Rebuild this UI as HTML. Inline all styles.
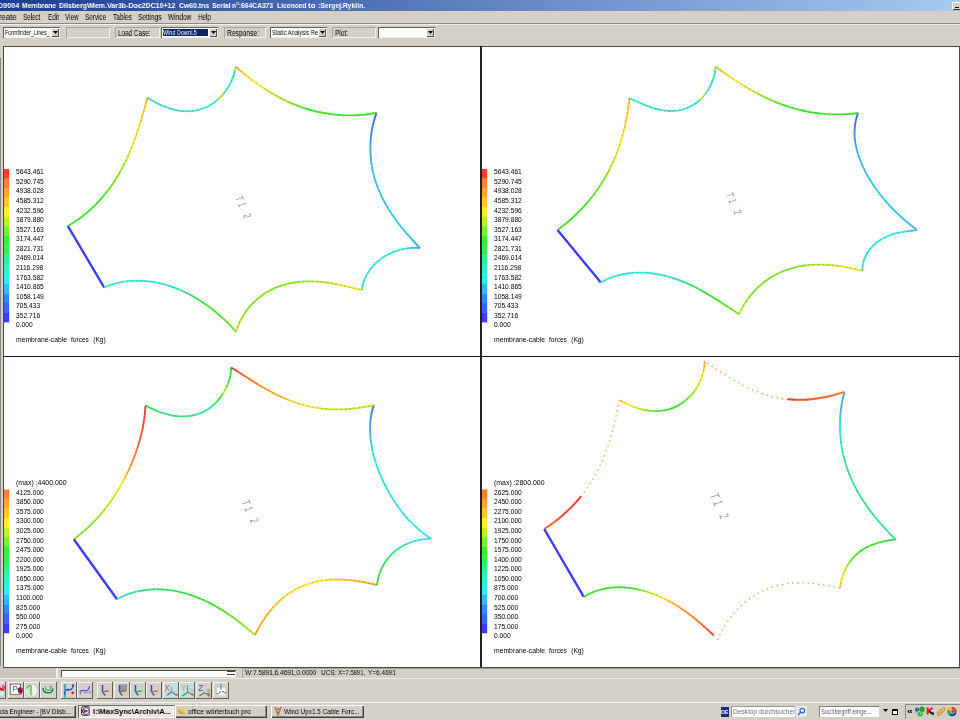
<!DOCTYPE html>
<html><head><meta charset="utf-8"><title>Membrane cable forces</title>
<style>
html,body{margin:0;padding:0}
body{width:960px;height:720px;overflow:hidden;background:#d4d0c8;position:relative;font-family:"Liberation Sans",sans-serif}
div,span.t,svg{position:absolute}
span.t{white-space:pre;display:block;will-change:transform}
.sunk{box-shadow:inset 1px 1px 0 #808080,inset -1px -1px 0 #fff}
.sunk2{box-shadow:inset 1px 1px 0 #808080,inset -1px -1px 0 #fff,inset 2px 2px 0 #404040}
.rais{box-shadow:inset -1px -1px 0 #404040,inset 1px 1px 0 #fff,inset -2px -2px 0 #808080}
.btn{box-shadow:inset -1px -1px 0 #606060,inset 1px 1px 0 #f4f2ee}
</style></head><body>

<div style="left:0px;top:0px;width:960px;height:10.7px;background:linear-gradient(90deg,#1b3c92 0%,#a6caf0 100%);"></div>
<div style="left:0;top:0;width:400px;height:10.7px">
<span class="t " style="left:-1.9px;top:-0.40px;font-size:8px;line-height:12px;color:#fff;transform:scaleX(0.8963);transform-origin:0 50%;font-weight:bold;">D9004</span>
 
<span class="t " style="left:21.6px;top:-0.40px;font-size:8px;line-height:12px;color:#fff;transform:scaleX(0.8542);transform-origin:0 50%;font-weight:bold;">Membrane</span>
 
<span class="t " style="left:59.1px;top:-0.40px;font-size:8px;line-height:12px;color:#fff;transform:scaleX(0.8768);transform-origin:0 50%;font-weight:bold;">Dilsberg\Mem.Var3b-Doc2DC10+12</span>
 
<span class="t " style="left:179.35px;top:-0.40px;font-size:8px;line-height:12px;color:#fff;transform:scaleX(0.8579);transform-origin:0 50%;font-weight:bold;">Cw60.tns</span>
 
<span class="t " style="left:211.85px;top:-0.40px;font-size:8px;line-height:12px;color:#fff;transform:scaleX(0.8549);transform-origin:0 50%;font-weight:bold;">Serial</span>
 
<span class="t " style="left:231.85px;top:-0.40px;font-size:8px;line-height:12px;color:#fff;transform:scaleX(0.8394);transform-origin:0 50%;font-weight:bold;">n°:664CA373</span>
 
<span class="t " style="left:276.6px;top:-0.40px;font-size:8px;line-height:12px;color:#fff;transform:scaleX(0.8472);transform-origin:0 50%;font-weight:bold;">Licenced</span>
 
<span class="t " style="left:308.35px;top:-0.40px;font-size:8px;line-height:12px;color:#fff;transform:scaleX(0.9442);transform-origin:0 50%;font-weight:bold;">to</span>
 
<span class="t " style="left:317.6px;top:-0.40px;font-size:8px;line-height:12px;color:#fff;transform:scaleX(0.8480);transform-origin:0 50%;font-weight:bold;">:Sergej.Ryklin.</span>
 
</div>
<div style="left:952px;top:1.5px;width:9px;height:8px;background:#d4d0c8;box-shadow:inset 1px 1px 0 #fff,inset -1px -1px 0 #404040;"></div>
<div style="left:955px;top:6.5px;width:4px;height:1.5px;background:#000;"></div>
<span class="t " style="left:-6.925px;top:11.10px;font-size:8.5px;line-height:13px;color:#000;transform:scaleX(0.9283);transform-origin:0 50%;">Create</span>
<span class="t " style="left:23.325px;top:11.10px;font-size:8.5px;line-height:13px;color:#000;transform:scaleX(0.7274);transform-origin:0 50%;">Select</span>
<span class="t " style="left:47.575px;top:11.10px;font-size:8.5px;line-height:13px;color:#000;transform:scaleX(0.7466);transform-origin:0 50%;">Edit</span>
<span class="t " style="left:65.075px;top:11.10px;font-size:8.5px;line-height:13px;color:#000;transform:scaleX(0.7353);transform-origin:0 50%;">View</span>
<span class="t " style="left:85.075px;top:11.10px;font-size:8.5px;line-height:13px;color:#000;transform:scaleX(0.7474);transform-origin:0 50%;">Service</span>
<span class="t " style="left:112.825px;top:11.10px;font-size:8.5px;line-height:13px;color:#000;transform:scaleX(0.7706);transform-origin:0 50%;">Tables</span>
<span class="t " style="left:138.325px;top:11.10px;font-size:8.5px;line-height:13px;color:#000;transform:scaleX(0.7630);transform-origin:0 50%;">Settings</span>
<span class="t " style="left:168.325px;top:11.10px;font-size:8.5px;line-height:13px;color:#000;transform:scaleX(0.7752);transform-origin:0 50%;">Window</span>
<span class="t " style="left:197.575px;top:11.10px;font-size:8.5px;line-height:13px;color:#000;transform:scaleX(0.7399);transform-origin:0 50%;">Help</span>
<div style="left:0px;top:23px;width:960px;height:1px;background:#8c8a84;"></div>
<div style="left:0px;top:24px;width:960px;height:1px;background:#f4f2ee;"></div>
<div style="left:3px;top:27px;width:57px;height:10.5px;background:#fff;box-shadow:inset 1px 1px 0 #606060,inset -1px -1px 0 #f0eee8;"></div>
<div style="left:50.5px;top:28px;width:8.5px;height:8.5px;background:#d4d0c8;box-shadow:inset 1px 1px 0 #fff,inset -1px -1px 0 #505050;"></div>
<svg style="left:52.5px;top:31px" width="5" height="3"><path d="M0 0H5L2.5 3Z" fill="#000"/></svg>
<span class="t " style="left:5.165px;top:27.70px;font-size:6.7px;line-height:10px;color:#000;transform:scaleX(0.8008);transform-origin:0 50%;">Formfinder_Lines_</span>
<div style="left:65.5px;top:27px;width:44.5px;height:10.5px;box-shadow:inset 1px 1px 0 #a8a6a0,inset -1px -1px 0 #f4f2ee;"></div>
<div style="left:115px;top:27px;width:45px;height:10.5px;box-shadow:inset 1px 1px 0 #a8a6a0,inset -1px -1px 0 #f4f2ee;"></div>
<span class="t " style="left:117.575px;top:26.50px;font-size:8.5px;line-height:13px;color:#000;transform:scaleX(0.7460);transform-origin:0 50%;">Load Case:</span>
<div style="left:161px;top:27px;width:57px;height:10.5px;background:#fff;box-shadow:inset 1px 1px 0 #606060,inset -1px -1px 0 #f0eee8;"></div>
<div style="left:208.5px;top:28px;width:8.5px;height:8.5px;background:#d4d0c8;box-shadow:inset 1px 1px 0 #fff,inset -1px -1px 0 #505050;"></div>
<svg style="left:210.5px;top:31px" width="5" height="3"><path d="M0 0H5L2.5 3Z" fill="#000"/></svg>
<div style="left:162.5px;top:28.5px;width:45px;height:7.5px;background:#0a246a;"></div>
<span class="t " style="left:163.165px;top:27.70px;font-size:6.7px;line-height:10px;color:#fff;transform:scaleX(0.8162);transform-origin:0 50%;">Wind Downl.5</span>
<div style="left:223.5px;top:27px;width:42.5px;height:10.5px;box-shadow:inset 1px 1px 0 #a8a6a0,inset -1px -1px 0 #f4f2ee;"></div>
<span class="t " style="left:226.575px;top:26.50px;font-size:8.5px;line-height:13px;color:#000;transform:scaleX(0.7859);transform-origin:0 50%;">Response:</span>
<div style="left:269.5px;top:27px;width:57.5px;height:10.5px;background:#fff;box-shadow:inset 1px 1px 0 #606060,inset -1px -1px 0 #f0eee8;"></div>
<div style="left:317.5px;top:28px;width:8.5px;height:8.5px;background:#d4d0c8;box-shadow:inset 1px 1px 0 #fff,inset -1px -1px 0 #505050;"></div>
<svg style="left:319.5px;top:31px" width="5" height="3"><path d="M0 0H5L2.5 3Z" fill="#000"/></svg>
<span class="t " style="left:271.665px;top:27.70px;font-size:6.7px;line-height:10px;color:#000;transform:scaleX(0.8622);transform-origin:0 50%;">Static Analysis Re</span>
<div style="left:332px;top:27px;width:44px;height:10.5px;box-shadow:inset 1px 1px 0 #a8a6a0,inset -1px -1px 0 #f4f2ee;"></div>
<span class="t " style="left:335.075px;top:26.50px;font-size:8.5px;line-height:13px;color:#000;transform:scaleX(0.7605);transform-origin:0 50%;">Plot:</span>
<div style="left:378px;top:27px;width:57px;height:10.5px;background:#fff;box-shadow:inset 1px 1px 0 #606060,inset -1px -1px 0 #f0eee8;"></div>
<div style="left:425.5px;top:28px;width:8.5px;height:8.5px;background:#d4d0c8;box-shadow:inset 1px 1px 0 #fff,inset -1px -1px 0 #505050;"></div>
<svg style="left:427.5px;top:31px" width="5" height="3"><path d="M0 0H5L2.5 3Z" fill="#000"/></svg>
<div style="left:2.5px;top:45.5px;width:957px;height:622.5px;background:#fff;box-sizing:border-box;border:1.5px solid #4a4a4a;border-right-width:1.2px;border-bottom-width:1.5px;"></div>
<div style="left:0px;top:58px;width:1.3px;height:608px;background:#8a8886;"></div>
<div style="left:480px;top:46px;width:1.7px;height:621px;background:#222;"></div>
<div style="left:3px;top:356px;width:956px;height:1.4px;background:#1a1a1a;"></div>
<svg width="960" height="720" viewBox="0 0 960 720" style="left:0;top:0" font-family="Liberation Sans, sans-serif">
<defs>
<linearGradient id="g1AB" gradientUnits="userSpaceOnUse" x1="235.6" y1="66.8" x2="147.5" y2="97.8"><stop offset="0.000" stop-color="#fca42c"/><stop offset="0.009" stop-color="#fcee2c"/><stop offset="0.021" stop-color="#30ee96"/><stop offset="0.084" stop-color="#30eec6"/><stop offset="0.175" stop-color="#30eeee"/><stop offset="0.259" stop-color="#c0ee2c"/><stop offset="0.326" stop-color="#30eeee"/><stop offset="0.555" stop-color="#30eeee"/><stop offset="0.728" stop-color="#30eec6"/><stop offset="1.000" stop-color="#30eec6"/></linearGradient>
<linearGradient id="g1BC" gradientUnits="userSpaceOnUse" x1="147.5" y1="97.8" x2="67.8" y2="226.0"><stop offset="0.000" stop-color="#fca42c"/><stop offset="0.030" stop-color="#fcc82c"/><stop offset="0.149" stop-color="#fcd82c"/><stop offset="0.279" stop-color="#fcee2c"/><stop offset="0.421" stop-color="#c0ee2c"/><stop offset="0.554" stop-color="#7cee2c"/><stop offset="0.759" stop-color="#36ee36"/><stop offset="1.000" stop-color="#36ee36"/></linearGradient>
<linearGradient id="g1CD" gradientUnits="userSpaceOnUse" x1="67.8" y1="226.0" x2="104.2" y2="287.5"><stop offset="0.000" stop-color="#3c3cfc"/><stop offset="1.000" stop-color="#3c3cfc"/></linearGradient>
<linearGradient id="g1DE" gradientUnits="userSpaceOnUse" x1="104.2" y1="287.5" x2="236.0" y2="331.8"><stop offset="0.000" stop-color="#30eeee"/><stop offset="0.335" stop-color="#30eeee"/><stop offset="0.495" stop-color="#30eec6"/><stop offset="0.654" stop-color="#30ee60"/><stop offset="0.807" stop-color="#36ee36"/><stop offset="1.000" stop-color="#7cee2c"/></linearGradient>
<linearGradient id="g1EF" gradientUnits="userSpaceOnUse" x1="236.0" y1="331.8" x2="361.8" y2="290.0"><stop offset="0.000" stop-color="#c0ee2c"/><stop offset="0.117" stop-color="#7cee2c"/><stop offset="0.489" stop-color="#7cee2c"/><stop offset="0.807" stop-color="#c0ee2c"/><stop offset="1.000" stop-color="#fcee2c"/></linearGradient>
<linearGradient id="g1FG" gradientUnits="userSpaceOnUse" x1="361.8" y1="290.0" x2="420.0" y2="248.0"><stop offset="0.000" stop-color="#30eec6"/><stop offset="0.279" stop-color="#30eeee"/><stop offset="0.816" stop-color="#30eeee"/><stop offset="1.000" stop-color="#34b8f6"/></linearGradient>
<linearGradient id="g1GH" gradientUnits="userSpaceOnUse" x1="420.0" y1="248.0" x2="376.5" y2="112.8"><stop offset="-0.000" stop-color="#34b8f6"/><stop offset="0.194" stop-color="#30d0f4"/><stop offset="0.610" stop-color="#30ccf4"/><stop offset="0.766" stop-color="#34b8f6"/><stop offset="0.893" stop-color="#3488f6"/><stop offset="1.000" stop-color="#3c62f6"/></linearGradient>
<linearGradient id="g1HA" gradientUnits="userSpaceOnUse" x1="376.5" y1="112.8" x2="235.6" y2="66.8"><stop offset="-0.000" stop-color="#36ee36"/><stop offset="0.446" stop-color="#36ee36"/><stop offset="0.602" stop-color="#7cee2c"/><stop offset="0.724" stop-color="#c0ee2c"/><stop offset="0.854" stop-color="#fcee2c"/><stop offset="0.952" stop-color="#fcc82c"/><stop offset="1.000" stop-color="#fca42c"/></linearGradient>
<linearGradient id="g2AB" gradientUnits="userSpaceOnUse" x1="715.5" y1="66.8" x2="629.5" y2="98.2"><stop offset="0.000" stop-color="#fca42c"/><stop offset="0.008" stop-color="#fcee2c"/><stop offset="0.018" stop-color="#30ee96"/><stop offset="0.077" stop-color="#30eec6"/><stop offset="0.166" stop-color="#30eeee"/><stop offset="0.249" stop-color="#c0ee2c"/><stop offset="0.317" stop-color="#30eeee"/><stop offset="0.548" stop-color="#30eeee"/><stop offset="0.719" stop-color="#30eec6"/><stop offset="1.000" stop-color="#30eec6"/></linearGradient>
<linearGradient id="g2BC" gradientUnits="userSpaceOnUse" x1="629.5" y1="98.2" x2="557.5" y2="230.0"><stop offset="0.000" stop-color="#fca42c"/><stop offset="0.029" stop-color="#fcc82c"/><stop offset="0.146" stop-color="#fcd82c"/><stop offset="0.275" stop-color="#fcee2c"/><stop offset="0.418" stop-color="#c0ee2c"/><stop offset="0.552" stop-color="#7cee2c"/><stop offset="0.757" stop-color="#36ee36"/><stop offset="1.000" stop-color="#36ee36"/></linearGradient>
<linearGradient id="g2CD" gradientUnits="userSpaceOnUse" x1="557.5" y1="230.0" x2="600.8" y2="282.5"><stop offset="0.000" stop-color="#3c3cfc"/><stop offset="1.000" stop-color="#3c3cfc"/></linearGradient>
<linearGradient id="g2DE" gradientUnits="userSpaceOnUse" x1="600.8" y1="282.5" x2="739.2" y2="314.2"><stop offset="0.000" stop-color="#30eeee"/><stop offset="0.335" stop-color="#30eeee"/><stop offset="0.493" stop-color="#30eec6"/><stop offset="0.649" stop-color="#30ee60"/><stop offset="0.801" stop-color="#36ee36"/><stop offset="1.000" stop-color="#7cee2c"/></linearGradient>
<linearGradient id="g2EF" gradientUnits="userSpaceOnUse" x1="739.2" y1="314.2" x2="862.5" y2="270.8"><stop offset="0.000" stop-color="#c0ee2c"/><stop offset="0.126" stop-color="#7cee2c"/><stop offset="0.494" stop-color="#7cee2c"/><stop offset="0.809" stop-color="#c0ee2c"/><stop offset="1.000" stop-color="#fcee2c"/></linearGradient>
<linearGradient id="g2FG" gradientUnits="userSpaceOnUse" x1="862.5" y1="270.8" x2="917.0" y2="230.0"><stop offset="0.000" stop-color="#30eec6"/><stop offset="0.268" stop-color="#30eeee"/><stop offset="0.805" stop-color="#30eeee"/><stop offset="1.000" stop-color="#34b8f6"/></linearGradient>
<linearGradient id="g2GH" gradientUnits="userSpaceOnUse" x1="917.0" y1="230.0" x2="858.0" y2="113.0"><stop offset="-0.000" stop-color="#34b8f6"/><stop offset="0.196" stop-color="#30d0f4"/><stop offset="0.614" stop-color="#30ccf4"/><stop offset="0.772" stop-color="#34b8f6"/><stop offset="0.900" stop-color="#3488f6"/><stop offset="1.000" stop-color="#3c62f6"/></linearGradient>
<linearGradient id="g2HA" gradientUnits="userSpaceOnUse" x1="858.0" y1="113.0" x2="715.5" y2="66.8"><stop offset="-0.000" stop-color="#36ee36"/><stop offset="0.447" stop-color="#36ee36"/><stop offset="0.601" stop-color="#7cee2c"/><stop offset="0.722" stop-color="#c0ee2c"/><stop offset="0.852" stop-color="#fcee2c"/><stop offset="0.951" stop-color="#fcc82c"/><stop offset="1.000" stop-color="#fca42c"/></linearGradient>
<linearGradient id="g3AB" gradientUnits="userSpaceOnUse" x1="231.2" y1="367.5" x2="145.5" y2="405.5"><stop offset="0.000" stop-color="#fb3a3a"/><stop offset="0.012" stop-color="#36ee36"/><stop offset="0.083" stop-color="#30ee60"/><stop offset="0.173" stop-color="#c0ee2c"/><stop offset="0.235" stop-color="#30ee60"/><stop offset="0.372" stop-color="#30ee96"/><stop offset="0.780" stop-color="#30ee96"/><stop offset="0.937" stop-color="#30ee60"/><stop offset="1.000" stop-color="#36ee36"/></linearGradient>
<linearGradient id="g3BC" gradientUnits="userSpaceOnUse" x1="145.5" y1="405.5" x2="73.8" y2="539.2"><stop offset="0.000" stop-color="#fb3a3a"/><stop offset="0.144" stop-color="#f05030"/><stop offset="0.295" stop-color="#fc8034"/><stop offset="0.418" stop-color="#fca42c"/><stop offset="0.521" stop-color="#fcee2c"/><stop offset="0.685" stop-color="#c0ee2c"/><stop offset="0.856" stop-color="#7cee2c"/><stop offset="1.000" stop-color="#7cee2c"/></linearGradient>
<linearGradient id="g3CD" gradientUnits="userSpaceOnUse" x1="73.8" y1="539.2" x2="117.0" y2="599.2"><stop offset="0.000" stop-color="#3c3cfc"/><stop offset="1.000" stop-color="#3c3cfc"/></linearGradient>
<linearGradient id="g3DE" gradientUnits="userSpaceOnUse" x1="117.0" y1="599.2" x2="255.0" y2="635.0"><stop offset="0.000" stop-color="#30eec6"/><stop offset="0.179" stop-color="#30ee96"/><stop offset="0.387" stop-color="#30ee60"/><stop offset="0.652" stop-color="#36ee36"/><stop offset="0.884" stop-color="#7cee2c"/><stop offset="1.000" stop-color="#c0ee2c"/></linearGradient>
<linearGradient id="g3EF" gradientUnits="userSpaceOnUse" x1="255.0" y1="635.0" x2="377.0" y2="585.0"><stop offset="0.000" stop-color="#fca42c"/><stop offset="0.229" stop-color="#fcc82c"/><stop offset="0.442" stop-color="#fcee2c"/><stop offset="0.607" stop-color="#fcee2c"/><stop offset="0.813" stop-color="#fcc82c"/><stop offset="1.000" stop-color="#fca42c"/></linearGradient>
<linearGradient id="g3FG" gradientUnits="userSpaceOnUse" x1="377.0" y1="585.0" x2="431.2" y2="538.8"><stop offset="0.000" stop-color="#36ee36"/><stop offset="0.282" stop-color="#30ee60"/><stop offset="0.554" stop-color="#30ee96"/><stop offset="0.766" stop-color="#30eeee"/><stop offset="1.000" stop-color="#30eeee"/></linearGradient>
<linearGradient id="g3GH" gradientUnits="userSpaceOnUse" x1="431.2" y1="538.8" x2="373.8" y2="405.0"><stop offset="-0.000" stop-color="#30eeee"/><stop offset="0.714" stop-color="#30eeee"/><stop offset="0.866" stop-color="#34b8f6"/><stop offset="0.958" stop-color="#3488f6"/><stop offset="1.000" stop-color="#3c62f6"/></linearGradient>
<linearGradient id="g3HA" gradientUnits="userSpaceOnUse" x1="373.8" y1="405.0" x2="231.2" y2="367.5"><stop offset="-0.000" stop-color="#c0ee2c"/><stop offset="0.291" stop-color="#c0ee2c"/><stop offset="0.446" stop-color="#fcee2c"/><stop offset="0.601" stop-color="#fcc82c"/><stop offset="0.722" stop-color="#fca42c"/><stop offset="0.852" stop-color="#fc8034"/><stop offset="1.000" stop-color="#fb3a3a"/></linearGradient>
<linearGradient id="g4AB" gradientUnits="userSpaceOnUse" x1="704.5" y1="361.2" x2="619.5" y2="400.0"><stop offset="0.000" stop-color="#fca42c"/><stop offset="0.065" stop-color="#fcee2c"/><stop offset="0.202" stop-color="#c0ee2c"/><stop offset="0.433" stop-color="#36ee36"/><stop offset="0.675" stop-color="#36ee36"/><stop offset="0.833" stop-color="#c0ee2c"/><stop offset="0.923" stop-color="#fcee2c"/><stop offset="1.000" stop-color="#fcc82c"/></linearGradient>
<linearGradient id="g4BC" gradientUnits="userSpaceOnUse" x1="619.5" y1="400.0" x2="544.2" y2="529.0"><stop offset="0.000" stop-color="#fb3a3a"/><stop offset="0.708" stop-color="#fb3a3a"/><stop offset="0.858" stop-color="#f05030"/><stop offset="1.000" stop-color="#fc8034"/></linearGradient>
<linearGradient id="g4CD" gradientUnits="userSpaceOnUse" x1="544.2" y1="529.0" x2="583.8" y2="596.8"><stop offset="0.000" stop-color="#3c3cfc"/><stop offset="1.000" stop-color="#3c3cfc"/></linearGradient>
<linearGradient id="g4DE" gradientUnits="userSpaceOnUse" x1="583.8" y1="596.8" x2="713.8" y2="635.5"><stop offset="0.000" stop-color="#36ee36"/><stop offset="0.331" stop-color="#36ee36"/><stop offset="0.460" stop-color="#c0ee2c"/><stop offset="0.567" stop-color="#fcee2c"/><stop offset="0.703" stop-color="#fca42c"/><stop offset="0.854" stop-color="#fc8034"/><stop offset="1.000" stop-color="#fb3a3a"/></linearGradient>
<linearGradient id="g4EF" gradientUnits="userSpaceOnUse" x1="717.5" y1="640.0" x2="840.0" y2="588.2"><stop offset="0.000" stop-color="#f89030"/><stop offset="1.000" stop-color="#f89030"/></linearGradient>
<linearGradient id="g4FG" gradientUnits="userSpaceOnUse" x1="840.0" y1="588.2" x2="895.5" y2="539.5"><stop offset="0.000" stop-color="#fcc82c"/><stop offset="0.105" stop-color="#fcee2c"/><stop offset="0.230" stop-color="#c0ee2c"/><stop offset="0.443" stop-color="#36ee36"/><stop offset="0.812" stop-color="#36ee36"/><stop offset="1.000" stop-color="#30ee60"/></linearGradient>
<linearGradient id="g4GH" gradientUnits="userSpaceOnUse" x1="895.5" y1="539.5" x2="844.5" y2="392.0"><stop offset="-0.000" stop-color="#30ee96"/><stop offset="0.450" stop-color="#30ee96"/><stop offset="0.660" stop-color="#30eec6"/><stop offset="0.793" stop-color="#30eeee"/><stop offset="0.910" stop-color="#34b8f6"/><stop offset="1.000" stop-color="#34b8f6"/></linearGradient>
<linearGradient id="g4HA" gradientUnits="userSpaceOnUse" x1="844.5" y1="392.0" x2="704.5" y2="361.2"><stop offset="-0.000" stop-color="#fc8034"/><stop offset="0.189" stop-color="#f86030"/><stop offset="0.341" stop-color="#f04830"/><stop offset="0.414" stop-color="#fb3a3a"/><stop offset="1.000" stop-color="#fb3a3a"/></linearGradient>
</defs>
<path d="M235.6 66.8L234.9 70.7L233.9 74.7L232.4 78.7L230.7 82.6L228.6 86.4L226.2 90.1L223.6 93.6L220.7 96.8L217.6 99.8L214.3 102.5L210.7 104.8L207.1 106.8L203.2 108.4L199.3 109.7L195.3 110.6L191.2 111.1L187.0 111.3L182.8 111.1L178.6 110.6L174.4 109.7L170.3 108.6L166.2 107.2L162.2 105.6L158.3 103.8L154.6 101.9L150.9 99.8L147.5 97.8" fill="none" stroke="url(#g1AB)" stroke-width="1.9" stroke-linejoin="round"/>
<path d="M235.6 66.8L234.9 70.7L233.9 74.7L232.4 78.7L230.7 82.6L228.6 86.4L226.2 90.1L223.6 93.6L220.7 96.8L217.6 99.8L214.3 102.5L210.7 104.8L207.1 106.8L203.2 108.4L199.3 109.7L195.3 110.6L191.2 111.1L187.0 111.3L182.8 111.1L178.6 110.6L174.4 109.7L170.3 108.6L166.2 107.2L162.2 105.6L158.3 103.8L154.6 101.9L150.9 99.8L147.5 97.8" fill="none" stroke="#f05020" stroke-width="1" stroke-dasharray="1 3.7" opacity=".7"/>
<path d="M147.5 97.8L146.0 103.2L144.4 108.8L142.8 114.3L141.2 119.8L139.5 125.3L137.7 130.8L135.9 136.3L133.9 141.7L131.8 147.1L129.6 152.5L127.3 157.8L124.8 163.0L122.1 168.1L119.4 173.2L116.4 178.1L113.3 182.9L110.1 187.6L106.6 192.2L103.0 196.7L99.2 201.0L95.2 205.1L91.1 209.0L86.8 212.8L82.3 216.4L77.6 219.8L72.8 223.0L67.8 226.0" fill="none" stroke="url(#g1BC)" stroke-width="1.9" stroke-linejoin="round"/>
<path d="M147.5 97.8L146.0 103.2L144.4 108.8L142.8 114.3L141.2 119.8L139.5 125.3L137.7 130.8L135.9 136.3L133.9 141.7L131.8 147.1L129.6 152.5L127.3 157.8L124.8 163.0L122.1 168.1L119.4 173.2L116.4 178.1L113.3 182.9L110.1 187.6L106.6 192.2L103.0 196.7L99.2 201.0L95.2 205.1L91.1 209.0L86.8 212.8L82.3 216.4L77.6 219.8L72.8 223.0L67.8 226.0" fill="none" stroke="#f05020" stroke-width="1" stroke-dasharray="1 3.7" opacity=".7"/>
<path d="M67.8 226.0L104.2 287.5" fill="none" stroke="url(#g1CD)" stroke-width="2.4" stroke-linejoin="round"/>
<path d="M104.2 287.5L109.4 285.4L114.7 283.7L120.1 282.4L125.5 281.4L130.9 280.9L136.4 280.6L141.8 280.8L147.3 281.2L152.7 281.9L158.1 282.9L163.4 284.2L168.7 285.7L173.9 287.5L179.0 289.5L184.1 291.8L189.0 294.2L193.9 296.9L198.6 299.7L203.2 302.7L207.7 305.8L212.1 309.1L216.4 312.6L220.6 316.2L224.6 319.9L228.5 323.7L232.3 327.7L236.0 331.8" fill="none" stroke="url(#g1DE)" stroke-width="1.9" stroke-linejoin="round"/>
<path d="M104.2 287.5L109.4 285.4L114.7 283.7L120.1 282.4L125.5 281.4L130.9 280.9L136.4 280.6L141.8 280.8L147.3 281.2L152.7 281.9L158.1 282.9L163.4 284.2L168.7 285.7L173.9 287.5L179.0 289.5L184.1 291.8L189.0 294.2L193.9 296.9L198.6 299.7L203.2 302.7L207.7 305.8L212.1 309.1L216.4 312.6L220.6 316.2L224.6 319.9L228.5 323.7L232.3 327.7L236.0 331.8" fill="none" stroke="#f05020" stroke-width="1" stroke-dasharray="1 3.7" opacity=".7"/>
<path d="M236.0 331.8L237.9 326.4L240.1 321.2L242.8 316.3L245.8 311.6L249.2 307.2L252.9 303.2L256.9 299.4L261.1 296.0L265.5 293.0L270.2 290.3L275.1 287.9L280.1 286.0L285.3 284.4L290.7 283.1L296.1 282.2L301.6 281.6L307.1 281.4L312.7 281.4L318.3 281.7L324.0 282.3L329.6 283.0L335.1 284.0L340.6 285.1L346.1 286.3L351.4 287.5L356.6 288.8L361.8 290.0" fill="none" stroke="url(#g1EF)" stroke-width="1.9" stroke-linejoin="round"/>
<path d="M236.0 331.8L237.9 326.4L240.1 321.2L242.8 316.3L245.8 311.6L249.2 307.2L252.9 303.2L256.9 299.4L261.1 296.0L265.5 293.0L270.2 290.3L275.1 287.9L280.1 286.0L285.3 284.4L290.7 283.1L296.1 282.2L301.6 281.6L307.1 281.4L312.7 281.4L318.3 281.7L324.0 282.3L329.6 283.0L335.1 284.0L340.6 285.1L346.1 286.3L351.4 287.5L356.6 288.8L361.8 290.0" fill="none" stroke="#f05020" stroke-width="1" stroke-dasharray="1 3.7" opacity=".7"/>
<path d="M361.8 290.0L362.3 287.0L363.0 284.1L363.9 281.2L365.0 278.5L366.2 275.9L367.6 273.3L369.2 270.9L370.9 268.6L372.7 266.3L374.7 264.2L376.8 262.3L379.0 260.4L381.3 258.6L383.7 257.0L386.2 255.5L388.8 254.1L391.4 252.9L394.1 251.7L396.9 250.8L399.7 249.9L402.6 249.2L405.4 248.6L408.3 248.2L411.3 247.9L414.2 247.8L417.1 247.8L420.0 248.0" fill="none" stroke="url(#g1FG)" stroke-width="1.9" stroke-linejoin="round"/>
<path d="M361.8 290.0L362.3 287.0L363.0 284.1L363.9 281.2L365.0 278.5L366.2 275.9L367.6 273.3L369.2 270.9L370.9 268.6L372.7 266.3L374.7 264.2L376.8 262.3L379.0 260.4L381.3 258.6L383.7 257.0L386.2 255.5L388.8 254.1L391.4 252.9L394.1 251.7L396.9 250.8L399.7 249.9L402.6 249.2L405.4 248.6L408.3 248.2L411.3 247.9L414.2 247.8L417.1 247.8L420.0 248.0" fill="none" stroke="#f05020" stroke-width="1" stroke-dasharray="1 3.7" opacity=".7"/>
<path d="M420.0 248.0L416.2 244.0L412.5 240.0L408.8 235.8L405.1 231.6L401.5 227.3L398.0 222.9L394.7 218.3L391.5 213.7L388.5 209.0L385.6 204.1L383.0 199.2L380.6 194.2L378.4 189.0L376.4 183.8L374.7 178.5L373.3 173.2L372.1 167.7L371.3 162.3L370.7 156.7L370.4 151.2L370.4 145.6L370.6 140.0L371.2 134.5L372.1 129.0L373.3 123.5L374.8 118.1L376.5 112.8" fill="none" stroke="url(#g1GH)" stroke-width="1.9" stroke-linejoin="round"/>
<path d="M420.0 248.0L416.2 244.0L412.5 240.0L408.8 235.8L405.1 231.6L401.5 227.3L398.0 222.9L394.7 218.3L391.5 213.7L388.5 209.0L385.6 204.1L383.0 199.2L380.6 194.2L378.4 189.0L376.4 183.8L374.7 178.5L373.3 173.2L372.1 167.7L371.3 162.3L370.7 156.7L370.4 151.2L370.4 145.6L370.6 140.0L371.2 134.5L372.1 129.0L373.3 123.5L374.8 118.1L376.5 112.8" fill="none" stroke="#f05020" stroke-width="1" stroke-dasharray="1 3.7" opacity=".7"/>
<path d="M376.5 112.8L370.9 113.7L365.3 114.5L359.6 115.0L353.9 115.3L348.2 115.4L342.5 115.2L336.8 114.8L331.1 114.2L325.5 113.3L319.8 112.3L314.3 111.0L308.8 109.5L303.4 107.8L298.0 105.9L292.7 103.8L287.5 101.5L282.4 99.0L277.4 96.4L272.4 93.6L267.6 90.6L262.8 87.5L258.1 84.3L253.4 81.0L248.9 77.6L244.4 74.0L240.0 70.4L235.6 66.8" fill="none" stroke="url(#g1HA)" stroke-width="1.9" stroke-linejoin="round"/>
<path d="M376.5 112.8L370.9 113.7L365.3 114.5L359.6 115.0L353.9 115.3L348.2 115.4L342.5 115.2L336.8 114.8L331.1 114.2L325.5 113.3L319.8 112.3L314.3 111.0L308.8 109.5L303.4 107.8L298.0 105.9L292.7 103.8L287.5 101.5L282.4 99.0L277.4 96.4L272.4 93.6L267.6 90.6L262.8 87.5L258.1 84.3L253.4 81.0L248.9 77.6L244.4 74.0L240.0 70.4L235.6 66.8" fill="none" stroke="#f05020" stroke-width="1" stroke-dasharray="1 3.7" opacity=".7"/>
<path d="M715.5 66.8L715.2 70.7L714.4 74.8L713.2 78.9L711.7 82.9L709.9 86.8L707.7 90.5L705.2 94.0L702.5 97.3L699.5 100.3L696.3 102.9L692.8 105.2L689.2 107.1L685.5 108.6L681.6 109.8L677.6 110.6L673.5 110.9L669.4 111.0L665.2 110.6L661.0 110.0L656.8 109.0L652.6 107.8L648.5 106.4L644.5 104.9L640.5 103.2L636.7 101.5L633.0 99.8L629.5 98.2" fill="none" stroke="url(#g2AB)" stroke-width="1.9" stroke-linejoin="round"/>
<path d="M715.5 66.8L715.2 70.7L714.4 74.8L713.2 78.9L711.7 82.9L709.9 86.8L707.7 90.5L705.2 94.0L702.5 97.3L699.5 100.3L696.3 102.9L692.8 105.2L689.2 107.1L685.5 108.6L681.6 109.8L677.6 110.6L673.5 110.9L669.4 111.0L665.2 110.6L661.0 110.0L656.8 109.0L652.6 107.8L648.5 106.4L644.5 104.9L640.5 103.2L636.7 101.5L633.0 99.8L629.5 98.2" fill="none" stroke="#f05020" stroke-width="1" stroke-dasharray="1 3.7" opacity=".7"/>
<path d="M629.5 98.2L628.8 103.9L628.0 109.6L627.1 115.2L626.0 120.9L624.8 126.5L623.4 132.1L621.9 137.6L620.2 143.1L618.4 148.6L616.4 154.0L614.2 159.3L611.9 164.5L609.4 169.7L606.7 174.8L603.8 179.7L600.8 184.6L597.6 189.3L594.3 194.0L590.7 198.5L587.1 202.9L583.2 207.2L579.3 211.3L575.2 215.3L570.9 219.2L566.6 223.0L562.1 226.5L557.5 230.0" fill="none" stroke="url(#g2BC)" stroke-width="1.9" stroke-linejoin="round"/>
<path d="M629.5 98.2L628.8 103.9L628.0 109.6L627.1 115.2L626.0 120.9L624.8 126.5L623.4 132.1L621.9 137.6L620.2 143.1L618.4 148.6L616.4 154.0L614.2 159.3L611.9 164.5L609.4 169.7L606.7 174.8L603.8 179.7L600.8 184.6L597.6 189.3L594.3 194.0L590.7 198.5L587.1 202.9L583.2 207.2L579.3 211.3L575.2 215.3L570.9 219.2L566.6 223.0L562.1 226.5L557.5 230.0" fill="none" stroke="#f05020" stroke-width="1" stroke-dasharray="1 3.7" opacity=".7"/>
<path d="M557.5 230.0L600.8 282.5" fill="none" stroke="url(#g2CD)" stroke-width="2.4" stroke-linejoin="round"/>
<path d="M600.8 282.5L605.7 279.9L610.8 277.7L616.1 275.9L621.5 274.5L627.0 273.5L632.5 272.9L638.0 272.6L643.6 272.6L649.2 273.0L654.7 273.7L660.2 274.6L665.6 275.8L671.0 277.3L676.3 279.1L681.5 281.0L686.6 283.1L691.7 285.5L696.7 288.0L701.6 290.6L706.4 293.4L711.2 296.2L715.9 299.1L720.6 302.1L725.2 305.2L729.9 308.2L734.6 311.3L739.2 314.2" fill="none" stroke="url(#g2DE)" stroke-width="1.9" stroke-linejoin="round"/>
<path d="M600.8 282.5L605.7 279.9L610.8 277.7L616.1 275.9L621.5 274.5L627.0 273.5L632.5 272.9L638.0 272.6L643.6 272.6L649.2 273.0L654.7 273.7L660.2 274.6L665.6 275.8L671.0 277.3L676.3 279.1L681.5 281.0L686.6 283.1L691.7 285.5L696.7 288.0L701.6 290.6L706.4 293.4L711.2 296.2L715.9 299.1L720.6 302.1L725.2 305.2L729.9 308.2L734.6 311.3L739.2 314.2" fill="none" stroke="#f05020" stroke-width="1" stroke-dasharray="1 3.7" opacity=".7"/>
<path d="M739.2 314.2L741.5 309.4L744.0 304.7L746.9 300.2L750.1 295.9L753.5 291.8L757.3 288.0L761.2 284.4L765.4 281.1L769.8 278.1L774.3 275.4L779.1 273.0L783.9 270.9L788.9 269.1L794.0 267.6L799.2 266.4L804.4 265.5L809.7 264.9L815.0 264.6L820.4 264.6L825.8 264.7L831.1 265.1L836.5 265.7L841.8 266.5L847.1 267.4L852.3 268.5L857.4 269.6L862.5 270.8" fill="none" stroke="url(#g2EF)" stroke-width="1.9" stroke-linejoin="round"/>
<path d="M739.2 314.2L741.5 309.4L744.0 304.7L746.9 300.2L750.1 295.9L753.5 291.8L757.3 288.0L761.2 284.4L765.4 281.1L769.8 278.1L774.3 275.4L779.1 273.0L783.9 270.9L788.9 269.1L794.0 267.6L799.2 266.4L804.4 265.5L809.7 264.9L815.0 264.6L820.4 264.6L825.8 264.7L831.1 265.1L836.5 265.7L841.8 266.5L847.1 267.4L852.3 268.5L857.4 269.6L862.5 270.8" fill="none" stroke="#f05020" stroke-width="1" stroke-dasharray="1 3.7" opacity=".7"/>
<path d="M862.5 270.8L862.5 267.9L862.8 265.1L863.3 262.4L864.1 259.7L865.2 257.1L866.4 254.5L867.8 252.1L869.5 249.9L871.2 247.7L873.2 245.7L875.2 243.8L877.4 242.0L879.7 240.4L882.1 239.0L884.6 237.7L887.1 236.5L889.7 235.4L892.3 234.5L895.0 233.7L897.7 233.0L900.5 232.4L903.2 231.9L906.0 231.5L908.8 231.1L911.5 230.7L914.3 230.4L917.0 230.0" fill="none" stroke="url(#g2FG)" stroke-width="1.9" stroke-linejoin="round"/>
<path d="M862.5 270.8L862.5 267.9L862.8 265.1L863.3 262.4L864.1 259.7L865.2 257.1L866.4 254.5L867.8 252.1L869.5 249.9L871.2 247.7L873.2 245.7L875.2 243.8L877.4 242.0L879.7 240.4L882.1 239.0L884.6 237.7L887.1 236.5L889.7 235.4L892.3 234.5L895.0 233.7L897.7 233.0L900.5 232.4L903.2 231.9L906.0 231.5L908.8 231.1L911.5 230.7L914.3 230.4L917.0 230.0" fill="none" stroke="#f05020" stroke-width="1" stroke-dasharray="1 3.7" opacity=".7"/>
<path d="M917.0 230.0L912.8 226.8L908.8 223.6L904.8 220.3L901.0 216.9L897.3 213.4L893.6 209.8L890.1 206.1L886.6 202.3L883.3 198.4L880.0 194.3L876.9 190.2L873.9 186.0L871.1 181.6L868.4 177.2L865.8 172.6L863.5 168.0L861.4 163.2L859.5 158.4L857.9 153.5L856.5 148.5L855.5 143.5L854.8 138.5L854.5 133.4L854.7 128.3L855.3 123.2L856.4 118.1L858.0 113.0" fill="none" stroke="url(#g2GH)" stroke-width="1.9" stroke-linejoin="round"/>
<path d="M917.0 230.0L912.8 226.8L908.8 223.6L904.8 220.3L901.0 216.9L897.3 213.4L893.6 209.8L890.1 206.1L886.6 202.3L883.3 198.4L880.0 194.3L876.9 190.2L873.9 186.0L871.1 181.6L868.4 177.2L865.8 172.6L863.5 168.0L861.4 163.2L859.5 158.4L857.9 153.5L856.5 148.5L855.5 143.5L854.8 138.5L854.5 133.4L854.7 128.3L855.3 123.2L856.4 118.1L858.0 113.0" fill="none" stroke="#f05020" stroke-width="1" stroke-dasharray="1 3.7" opacity=".7"/>
<path d="M858.0 113.0L852.4 113.7L846.7 114.1L841.0 114.4L835.3 114.4L829.6 114.3L823.9 113.9L818.2 113.3L812.5 112.5L806.9 111.5L801.3 110.3L795.8 108.9L790.3 107.3L784.9 105.5L779.5 103.6L774.3 101.5L769.0 99.2L763.9 96.8L758.8 94.2L753.8 91.5L748.8 88.7L743.9 85.8L739.1 82.8L734.3 79.7L729.5 76.5L724.8 73.3L720.2 70.0L715.5 66.8" fill="none" stroke="url(#g2HA)" stroke-width="1.9" stroke-linejoin="round"/>
<path d="M858.0 113.0L852.4 113.7L846.7 114.1L841.0 114.4L835.3 114.4L829.6 114.3L823.9 113.9L818.2 113.3L812.5 112.5L806.9 111.5L801.3 110.3L795.8 108.9L790.3 107.3L784.9 105.5L779.5 103.6L774.3 101.5L769.0 99.2L763.9 96.8L758.8 94.2L753.8 91.5L748.8 88.7L743.9 85.8L739.1 82.8L734.3 79.7L729.5 76.5L724.8 73.3L720.2 70.0L715.5 66.8" fill="none" stroke="#f05020" stroke-width="1" stroke-dasharray="1 3.7" opacity=".7"/>
<path d="M231.2 367.5L230.9 371.5L230.2 375.7L229.2 379.8L227.8 384.0L226.1 388.0L224.0 391.9L221.7 395.6L219.1 399.1L216.2 402.4L213.1 405.3L209.8 408.0L206.3 410.3L202.6 412.2L198.7 413.8L194.7 415.0L190.6 415.8L186.4 416.3L182.2 416.4L177.9 416.2L173.6 415.7L169.3 414.8L165.1 413.7L160.9 412.4L156.8 410.8L152.9 409.1L149.1 407.3L145.5 405.5" fill="none" stroke="url(#g3AB)" stroke-width="1.9" stroke-linejoin="round"/>
<path d="M231.2 367.5L230.9 371.5L230.2 375.7L229.2 379.8L227.8 384.0L226.1 388.0L224.0 391.9L221.7 395.6L219.1 399.1L216.2 402.4L213.1 405.3L209.8 408.0L206.3 410.3L202.6 412.2L198.7 413.8L194.7 415.0L190.6 415.8L186.4 416.3L182.2 416.4L177.9 416.2L173.6 415.7L169.3 414.8L165.1 413.7L160.9 412.4L156.8 410.8L152.9 409.1L149.1 407.3L145.5 405.5" fill="none" stroke="#f05020" stroke-width="1" stroke-dasharray="1 3.7" opacity=".7"/>
<path d="M145.5 405.5L145.1 411.3L144.5 417.1L143.6 422.8L142.6 428.5L141.3 434.1L139.9 439.7L138.3 445.3L136.5 450.8L134.5 456.2L132.4 461.6L130.1 467.0L127.7 472.2L125.1 477.4L122.4 482.6L119.5 487.6L116.5 492.6L113.4 497.4L110.1 502.2L106.6 506.8L103.0 511.4L99.3 515.8L95.4 520.1L91.4 524.2L87.2 528.2L82.9 532.1L78.4 535.8L73.8 539.2" fill="none" stroke="url(#g3BC)" stroke-width="1.9" stroke-linejoin="round"/>
<path d="M145.5 405.5L145.1 411.3L144.5 417.1L143.6 422.8L142.6 428.5L141.3 434.1L139.9 439.7L138.3 445.3L136.5 450.8L134.5 456.2L132.4 461.6L130.1 467.0L127.7 472.2L125.1 477.4L122.4 482.6L119.5 487.6L116.5 492.6L113.4 497.4L110.1 502.2L106.6 506.8L103.0 511.4L99.3 515.8L95.4 520.1L91.4 524.2L87.2 528.2L82.9 532.1L78.4 535.8L73.8 539.2" fill="none" stroke="#f05020" stroke-width="1" stroke-dasharray="1 3.7" opacity=".7"/>
<path d="M73.8 539.2L117.0 599.2" fill="none" stroke="url(#g3CD)" stroke-width="2.4" stroke-linejoin="round"/>
<path d="M117.0 599.2L122.1 596.6L127.3 594.4L132.7 592.6L138.1 591.2L143.6 590.2L149.2 589.6L154.8 589.3L160.4 589.3L166.0 589.7L171.6 590.4L177.2 591.4L182.6 592.6L188.1 594.2L193.4 596.0L198.7 598.0L203.9 600.2L209.0 602.7L214.0 605.3L218.9 608.1L223.7 611.1L228.4 614.2L233.1 617.4L237.6 620.8L242.0 624.2L246.4 627.8L250.7 631.4L255.0 635.0" fill="none" stroke="url(#g3DE)" stroke-width="1.9" stroke-linejoin="round"/>
<path d="M117.0 599.2L122.1 596.6L127.3 594.4L132.7 592.6L138.1 591.2L143.6 590.2L149.2 589.6L154.8 589.3L160.4 589.3L166.0 589.7L171.6 590.4L177.2 591.4L182.6 592.6L188.1 594.2L193.4 596.0L198.7 598.0L203.9 600.2L209.0 602.7L214.0 605.3L218.9 608.1L223.7 611.1L228.4 614.2L233.1 617.4L237.6 620.8L242.0 624.2L246.4 627.8L250.7 631.4L255.0 635.0" fill="none" stroke="#f05020" stroke-width="1" stroke-dasharray="1 3.7" opacity=".7"/>
<path d="M255.0 635.0L257.4 630.3L260.0 625.6L262.8 621.0L265.9 616.5L269.2 612.1L272.7 607.9L276.4 604.0L280.3 600.3L284.5 596.8L288.8 593.6L293.3 590.8L297.9 588.2L302.8 586.0L307.7 584.1L312.8 582.5L318.1 581.3L323.4 580.4L328.8 579.8L334.2 579.5L339.7 579.5L345.2 579.7L350.7 580.2L356.1 580.9L361.5 581.8L366.8 582.8L372.0 583.9L377.0 585.0" fill="none" stroke="url(#g3EF)" stroke-width="1.9" stroke-linejoin="round"/>
<path d="M255.0 635.0L257.4 630.3L260.0 625.6L262.8 621.0L265.9 616.5L269.2 612.1L272.7 607.9L276.4 604.0L280.3 600.3L284.5 596.8L288.8 593.6L293.3 590.8L297.9 588.2L302.8 586.0L307.7 584.1L312.8 582.5L318.1 581.3L323.4 580.4L328.8 579.8L334.2 579.5L339.7 579.5L345.2 579.7L350.7 580.2L356.1 580.9L361.5 581.8L366.8 582.8L372.0 583.9L377.0 585.0" fill="none" stroke="#f05020" stroke-width="1" stroke-dasharray="1 3.7" opacity=".7"/>
<path d="M377.0 585.0L377.4 582.2L378.0 579.3L378.7 576.5L379.5 573.8L380.6 571.0L381.7 568.4L383.1 565.8L384.5 563.2L386.1 560.8L387.9 558.5L389.8 556.3L391.8 554.2L393.9 552.2L396.1 550.3L398.4 548.6L400.8 547.0L403.3 545.6L405.9 544.3L408.6 543.1L411.3 542.1L414.1 541.2L416.9 540.5L419.7 539.9L422.6 539.4L425.5 539.1L428.4 538.9L431.2 538.8" fill="none" stroke="url(#g3FG)" stroke-width="1.9" stroke-linejoin="round"/>
<path d="M377.0 585.0L377.4 582.2L378.0 579.3L378.7 576.5L379.5 573.8L380.6 571.0L381.7 568.4L383.1 565.8L384.5 563.2L386.1 560.8L387.9 558.5L389.8 556.3L391.8 554.2L393.9 552.2L396.1 550.3L398.4 548.6L400.8 547.0L403.3 545.6L405.9 544.3L408.6 543.1L411.3 542.1L414.1 541.2L416.9 540.5L419.7 539.9L422.6 539.4L425.5 539.1L428.4 538.9L431.2 538.8" fill="none" stroke="#f05020" stroke-width="1" stroke-dasharray="1 3.7" opacity=".7"/>
<path d="M431.2 538.8L426.4 535.5L421.8 532.0L417.4 528.3L413.2 524.4L409.2 520.4L405.4 516.2L401.8 511.8L398.4 507.3L395.2 502.6L392.1 497.8L389.1 492.9L386.4 487.8L383.8 482.7L381.4 477.4L379.1 472.1L377.1 466.7L375.3 461.2L373.7 455.7L372.4 450.1L371.4 444.5L370.6 438.8L370.2 433.2L370.1 427.5L370.3 421.8L371.0 416.2L372.1 410.6L373.8 405.0" fill="none" stroke="url(#g3GH)" stroke-width="1.9" stroke-linejoin="round"/>
<path d="M431.2 538.8L426.4 535.5L421.8 532.0L417.4 528.3L413.2 524.4L409.2 520.4L405.4 516.2L401.8 511.8L398.4 507.3L395.2 502.6L392.1 497.8L389.1 492.9L386.4 487.8L383.8 482.7L381.4 477.4L379.1 472.1L377.1 466.7L375.3 461.2L373.7 455.7L372.4 450.1L371.4 444.5L370.6 438.8L370.2 433.2L370.1 427.5L370.3 421.8L371.0 416.2L372.1 410.6L373.8 405.0" fill="none" stroke="#f05020" stroke-width="1" stroke-dasharray="1 3.7" opacity=".7"/>
<path d="M373.8 405.0L368.3 406.2L362.7 407.2L357.1 408.1L351.5 408.7L345.8 409.2L340.1 409.4L334.4 409.4L328.8 409.2L323.1 408.7L317.5 407.9L312.0 407.0L306.5 405.8L301.0 404.3L295.7 402.6L290.4 400.7L285.1 398.6L280.0 396.3L274.9 393.9L269.8 391.2L264.9 388.5L259.9 385.6L255.1 382.6L250.3 379.6L245.5 376.5L240.7 373.5L236.0 370.4L231.2 367.5" fill="none" stroke="url(#g3HA)" stroke-width="1.9" stroke-linejoin="round"/>
<path d="M373.8 405.0L368.3 406.2L362.7 407.2L357.1 408.1L351.5 408.7L345.8 409.2L340.1 409.4L334.4 409.4L328.8 409.2L323.1 408.7L317.5 407.9L312.0 407.0L306.5 405.8L301.0 404.3L295.7 402.6L290.4 400.7L285.1 398.6L280.0 396.3L274.9 393.9L269.8 391.2L264.9 388.5L259.9 385.6L255.1 382.6L250.3 379.6L245.5 376.5L240.7 373.5L236.0 370.4L231.2 367.5" fill="none" stroke="#f05020" stroke-width="1" stroke-dasharray="1 3.7" opacity=".7"/>
<path d="M704.5 361.2L704.4 365.3L703.8 369.5L702.9 373.7L701.5 377.8L699.9 381.9L697.9 385.8L695.6 389.5L693.0 393.0L690.1 396.3L687.0 399.3L683.7 402.0L680.1 404.4L676.4 406.4L672.6 408.0L668.6 409.3L664.5 410.3L660.3 410.9L656.1 411.1L651.8 410.9L647.6 410.5L643.3 409.7L639.1 408.6L634.9 407.3L630.9 405.7L626.9 403.9L623.1 402.0L619.5 400.0" fill="none" stroke="url(#g4AB)" stroke-width="1.9" stroke-linejoin="round"/>
<path d="M704.5 361.2L704.4 365.3L703.8 369.5L702.9 373.7L701.5 377.8L699.9 381.9L697.9 385.8L695.6 389.5L693.0 393.0L690.1 396.3L687.0 399.3L683.7 402.0L680.1 404.4L676.4 406.4L672.6 408.0L668.6 409.3L664.5 410.3L660.3 410.9L656.1 411.1L651.8 410.9L647.6 410.5L643.3 409.7L639.1 408.6L634.9 407.3L630.9 405.7L626.9 403.9L623.1 402.0L619.5 400.0" fill="none" stroke="#f05020" stroke-width="1" stroke-dasharray="1 3.7" opacity=".7"/>
<path d="M619.5 400.0L618.3 405.6L617.2 411.1L615.9 416.7L614.6 422.3L613.3 427.8L611.8 433.4L610.2 438.9L608.5 444.3L606.6 449.8L604.6 455.1L602.5 460.4L600.1 465.6L597.6 470.7L594.9 475.7L592.0 480.6L589.0 485.5L585.7 490.1L582.3 494.7L578.7 499.1L574.9 503.4L571.0 507.6L566.8 511.6L562.6 515.4L558.2 519.1L553.6 522.6L549.0 525.9L544.2 529.0" fill="none" stroke="#f89030" stroke-width="1.35" stroke-dasharray="1.4 3.8" opacity=".9"/>
<path d="M619.5 400.0L618.3 405.6L617.2 411.1L615.9 416.7L614.6 422.3L613.3 427.8L611.8 433.4L610.2 438.9L608.5 444.3L606.6 449.8L604.6 455.1L602.5 460.4L600.1 465.6L597.6 470.7L594.9 475.7L592.0 480.6L589.0 485.5L585.7 490.1L582.3 494.7L578.7 499.1L574.9 503.4L571.0 507.6L566.8 511.6L562.6 515.4L558.2 519.1L553.6 522.6L549.0 525.9L544.2 529.0" pathLength="100" fill="none" stroke="url(#g4BC)" stroke-width="2.1" stroke-dasharray="0 68.0 32.0 200"/>
<path d="M544.2 529.0L583.8 596.8" fill="none" stroke="url(#g4CD)" stroke-width="2.4" stroke-linejoin="round"/>
<path d="M583.8 596.8L588.6 594.1L593.6 591.9L598.7 590.1L603.9 588.8L609.2 587.9L614.5 587.4L619.9 587.3L625.3 587.5L630.6 588.1L636.0 589.0L641.2 590.1L646.5 591.6L651.6 593.3L656.7 595.2L661.6 597.4L666.5 599.8L671.3 602.4L676.0 605.1L680.5 608.0L685.0 611.1L689.3 614.3L693.6 617.6L697.7 621.0L701.8 624.5L705.9 628.1L709.8 631.8L713.8 635.5" fill="none" stroke="url(#g4DE)" stroke-width="1.9" stroke-linejoin="round"/>
<path d="M583.8 596.8L588.6 594.1L593.6 591.9L598.7 590.1L603.9 588.8L609.2 587.9L614.5 587.4L619.9 587.3L625.3 587.5L630.6 588.1L636.0 589.0L641.2 590.1L646.5 591.6L651.6 593.3L656.7 595.2L661.6 597.4L666.5 599.8L671.3 602.4L676.0 605.1L680.5 608.0L685.0 611.1L689.3 614.3L693.6 617.6L697.7 621.0L701.8 624.5L705.9 628.1L709.8 631.8L713.8 635.5" fill="none" stroke="#f05020" stroke-width="1" stroke-dasharray="1 3.7" opacity=".7"/>
<path d="M717.5 640.0L719.7 635.2L722.1 630.4L724.9 625.7L727.9 621.1L731.2 616.6L734.7 612.3L738.5 608.2L742.5 604.4L746.6 600.8L751.0 597.6L755.6 594.6L760.3 592.0L765.2 589.6L770.2 587.7L775.3 586.0L780.6 584.7L785.9 583.8L791.3 583.1L796.7 582.8L802.2 582.8L807.7 583.0L813.2 583.5L818.7 584.1L824.1 585.0L829.5 586.0L834.8 587.1L840.0 588.2" fill="none" stroke="#f89030" stroke-width="1.35" stroke-dasharray="1.4 3.8" opacity=".9"/>
<path d="M840.0 588.2L840.4 585.4L841.0 582.4L841.7 579.5L842.6 576.6L843.6 573.7L844.7 570.9L846.0 568.2L847.5 565.5L849.1 563.0L850.8 560.6L852.7 558.2L854.7 556.1L856.9 554.0L859.1 552.1L861.5 550.4L864.0 548.8L866.6 547.3L869.3 546.0L872.1 544.8L875.0 543.8L877.9 542.9L880.8 542.1L883.8 541.4L886.7 540.8L889.7 540.3L892.6 539.9L895.5 539.5" fill="none" stroke="url(#g4FG)" stroke-width="1.9" stroke-linejoin="round"/>
<path d="M840.0 588.2L840.4 585.4L841.0 582.4L841.7 579.5L842.6 576.6L843.6 573.7L844.7 570.9L846.0 568.2L847.5 565.5L849.1 563.0L850.8 560.6L852.7 558.2L854.7 556.1L856.9 554.0L859.1 552.1L861.5 550.4L864.0 548.8L866.6 547.3L869.3 546.0L872.1 544.8L875.0 543.8L877.9 542.9L880.8 542.1L883.8 541.4L886.7 540.8L889.7 540.3L892.6 539.9L895.5 539.5" fill="none" stroke="#f05020" stroke-width="1" stroke-dasharray="1 3.7" opacity=".7"/>
<path d="M895.5 539.5L891.3 535.1L887.1 530.7L883.0 526.2L878.9 521.6L875.0 516.9L871.2 512.1L867.6 507.3L864.2 502.3L860.9 497.2L857.8 492.0L854.9 486.6L852.3 481.2L849.9 475.6L847.7 470.0L845.8 464.2L844.1 458.3L842.7 452.4L841.6 446.4L840.8 440.3L840.2 434.2L840.0 428.0L840.0 421.9L840.3 415.8L840.9 409.7L841.8 403.7L843.0 397.8L844.5 392.0" fill="none" stroke="url(#g4GH)" stroke-width="1.9" stroke-linejoin="round"/>
<path d="M895.5 539.5L891.3 535.1L887.1 530.7L883.0 526.2L878.9 521.6L875.0 516.9L871.2 512.1L867.6 507.3L864.2 502.3L860.9 497.2L857.8 492.0L854.9 486.6L852.3 481.2L849.9 475.6L847.7 470.0L845.8 464.2L844.1 458.3L842.7 452.4L841.6 446.4L840.8 440.3L840.2 434.2L840.0 428.0L840.0 421.9L840.3 415.8L840.9 409.7L841.8 403.7L843.0 397.8L844.5 392.0" fill="none" stroke="#f05020" stroke-width="1" stroke-dasharray="1 3.7" opacity=".7"/>
<path d="M844.5 392.0L839.3 393.6L833.9 395.1L828.5 396.4L823.0 397.5L817.4 398.4L811.9 399.1L806.3 399.6L800.7 399.8L795.2 399.8L789.6 399.4L784.1 398.9L778.7 398.0L773.3 396.9L767.9 395.5L762.6 393.8L757.4 391.9L752.3 389.8L747.2 387.5L742.3 384.9L737.3 382.2L732.5 379.4L727.7 376.4L723.0 373.4L718.3 370.3L713.7 367.3L709.1 364.2L704.5 361.2" fill="none" stroke="#f89030" stroke-width="1.35" stroke-dasharray="1.4 3.8" opacity=".9"/>
<path d="M844.5 392.0L839.3 393.6L833.9 395.1L828.5 396.4L823.0 397.5L817.4 398.4L811.9 399.1L806.3 399.6L800.7 399.8L795.2 399.8L789.6 399.4L784.1 398.9L778.7 398.0L773.3 396.9L767.9 395.5L762.6 393.8L757.4 391.9L752.3 389.8L747.2 387.5L742.3 384.9L737.3 382.2L732.5 379.4L727.7 376.4L723.0 373.4L718.3 370.3L713.7 367.3L709.1 364.2L704.5 361.2" pathLength="100" fill="none" stroke="url(#g4HA)" stroke-width="2.1" stroke-dasharray="0 0.0 38.5 200"/>
<text x="16" y="174.25" font-size="6.9" fill="#000" textLength="27.8" lengthAdjust="spacingAndGlyphs">5643.461</text>
<text x="16" y="183.82" font-size="6.9" fill="#000" textLength="27.8" lengthAdjust="spacingAndGlyphs">5290.745</text>
<text x="16" y="193.39" font-size="6.9" fill="#000" textLength="27.8" lengthAdjust="spacingAndGlyphs">4938.028</text>
<text x="16" y="202.96" font-size="6.9" fill="#000" textLength="27.8" lengthAdjust="spacingAndGlyphs">4585.312</text>
<text x="16" y="212.53" font-size="6.9" fill="#000" textLength="27.8" lengthAdjust="spacingAndGlyphs">4232.596</text>
<text x="16" y="222.10" font-size="6.9" fill="#000" textLength="27.8" lengthAdjust="spacingAndGlyphs">3879.880</text>
<text x="16" y="231.67" font-size="6.9" fill="#000" textLength="27.8" lengthAdjust="spacingAndGlyphs">3527.163</text>
<text x="16" y="241.24" font-size="6.9" fill="#000" textLength="27.8" lengthAdjust="spacingAndGlyphs">3174.447</text>
<text x="16" y="250.81" font-size="6.9" fill="#000" textLength="27.8" lengthAdjust="spacingAndGlyphs">2821.731</text>
<text x="16" y="260.38" font-size="6.9" fill="#000" textLength="27.8" lengthAdjust="spacingAndGlyphs">2469.014</text>
<text x="16" y="269.95" font-size="6.9" fill="#000" textLength="27.3" lengthAdjust="spacingAndGlyphs">2116.298</text>
<text x="16" y="279.52" font-size="6.9" fill="#000" textLength="27.8" lengthAdjust="spacingAndGlyphs">1763.582</text>
<text x="16" y="289.09" font-size="6.9" fill="#000" textLength="27.8" lengthAdjust="spacingAndGlyphs">1410.865</text>
<text x="16" y="298.66" font-size="6.9" fill="#000" textLength="27.8" lengthAdjust="spacingAndGlyphs">1058.149</text>
<text x="16" y="308.23" font-size="6.9" fill="#000" textLength="24.1" lengthAdjust="spacingAndGlyphs">705.433</text>
<text x="16" y="317.80" font-size="6.9" fill="#000" textLength="24.1" lengthAdjust="spacingAndGlyphs">352.716</text>
<text x="16" y="327.37" font-size="6.9" fill="#000" textLength="16.7" lengthAdjust="spacingAndGlyphs">0.000</text>
<rect x="4" y="169.00" width="5.2" height="9.8" fill="#fb3a3a"/>
<rect x="4" y="178.57" width="5.2" height="9.8" fill="#fc8034"/>
<rect x="4" y="188.14" width="5.2" height="9.8" fill="#fca42c"/>
<rect x="4" y="197.71" width="5.2" height="9.8" fill="#fcc82c"/>
<rect x="4" y="207.28" width="5.2" height="9.8" fill="#fcee2c"/>
<rect x="4" y="216.85" width="5.2" height="9.8" fill="#c0ee2c"/>
<rect x="4" y="226.42" width="5.2" height="9.8" fill="#7cee2c"/>
<rect x="4" y="235.99" width="5.2" height="9.8" fill="#36ee36"/>
<rect x="4" y="245.56" width="5.2" height="9.8" fill="#30ee60"/>
<rect x="4" y="255.13" width="5.2" height="9.8" fill="#30ee96"/>
<rect x="4" y="264.70" width="5.2" height="9.8" fill="#30eec6"/>
<rect x="4" y="274.27" width="5.2" height="9.8" fill="#30eeee"/>
<rect x="4" y="283.84" width="5.2" height="9.8" fill="#34b8f6"/>
<rect x="4" y="293.41" width="5.2" height="9.8" fill="#3488f6"/>
<rect x="4" y="302.98" width="5.2" height="9.8" fill="#3c62f6"/>
<rect x="4" y="312.55" width="5.2" height="9.8" fill="#3c3cfc"/>
<text y="341.89" font-size="6.9" fill="#000"><tspan x="16" textLength="51" lengthAdjust="spacingAndGlyphs">membrane-cable</tspan> <tspan x="71" textLength="17.8" lengthAdjust="spacingAndGlyphs">forces</tspan> <tspan x="93.2" textLength="12.5" lengthAdjust="spacingAndGlyphs">(Kg)</tspan></text>
<text x="494" y="174.25" font-size="6.9" fill="#000" textLength="27.8" lengthAdjust="spacingAndGlyphs">5643.461</text>
<text x="494" y="183.82" font-size="6.9" fill="#000" textLength="27.8" lengthAdjust="spacingAndGlyphs">5290.745</text>
<text x="494" y="193.39" font-size="6.9" fill="#000" textLength="27.8" lengthAdjust="spacingAndGlyphs">4938.028</text>
<text x="494" y="202.96" font-size="6.9" fill="#000" textLength="27.8" lengthAdjust="spacingAndGlyphs">4585.312</text>
<text x="494" y="212.53" font-size="6.9" fill="#000" textLength="27.8" lengthAdjust="spacingAndGlyphs">4232.596</text>
<text x="494" y="222.10" font-size="6.9" fill="#000" textLength="27.8" lengthAdjust="spacingAndGlyphs">3879.880</text>
<text x="494" y="231.67" font-size="6.9" fill="#000" textLength="27.8" lengthAdjust="spacingAndGlyphs">3527.163</text>
<text x="494" y="241.24" font-size="6.9" fill="#000" textLength="27.8" lengthAdjust="spacingAndGlyphs">3174.447</text>
<text x="494" y="250.81" font-size="6.9" fill="#000" textLength="27.8" lengthAdjust="spacingAndGlyphs">2821.731</text>
<text x="494" y="260.38" font-size="6.9" fill="#000" textLength="27.8" lengthAdjust="spacingAndGlyphs">2469.014</text>
<text x="494" y="269.95" font-size="6.9" fill="#000" textLength="27.3" lengthAdjust="spacingAndGlyphs">2116.298</text>
<text x="494" y="279.52" font-size="6.9" fill="#000" textLength="27.8" lengthAdjust="spacingAndGlyphs">1763.582</text>
<text x="494" y="289.09" font-size="6.9" fill="#000" textLength="27.8" lengthAdjust="spacingAndGlyphs">1410.865</text>
<text x="494" y="298.66" font-size="6.9" fill="#000" textLength="27.8" lengthAdjust="spacingAndGlyphs">1058.149</text>
<text x="494" y="308.23" font-size="6.9" fill="#000" textLength="24.1" lengthAdjust="spacingAndGlyphs">705.433</text>
<text x="494" y="317.80" font-size="6.9" fill="#000" textLength="24.1" lengthAdjust="spacingAndGlyphs">352.716</text>
<text x="494" y="327.37" font-size="6.9" fill="#000" textLength="16.7" lengthAdjust="spacingAndGlyphs">0.000</text>
<rect x="482" y="169.00" width="5.2" height="9.8" fill="#fb3a3a"/>
<rect x="482" y="178.57" width="5.2" height="9.8" fill="#fc8034"/>
<rect x="482" y="188.14" width="5.2" height="9.8" fill="#fca42c"/>
<rect x="482" y="197.71" width="5.2" height="9.8" fill="#fcc82c"/>
<rect x="482" y="207.28" width="5.2" height="9.8" fill="#fcee2c"/>
<rect x="482" y="216.85" width="5.2" height="9.8" fill="#c0ee2c"/>
<rect x="482" y="226.42" width="5.2" height="9.8" fill="#7cee2c"/>
<rect x="482" y="235.99" width="5.2" height="9.8" fill="#36ee36"/>
<rect x="482" y="245.56" width="5.2" height="9.8" fill="#30ee60"/>
<rect x="482" y="255.13" width="5.2" height="9.8" fill="#30ee96"/>
<rect x="482" y="264.70" width="5.2" height="9.8" fill="#30eec6"/>
<rect x="482" y="274.27" width="5.2" height="9.8" fill="#30eeee"/>
<rect x="482" y="283.84" width="5.2" height="9.8" fill="#34b8f6"/>
<rect x="482" y="293.41" width="5.2" height="9.8" fill="#3488f6"/>
<rect x="482" y="302.98" width="5.2" height="9.8" fill="#3c62f6"/>
<rect x="482" y="312.55" width="5.2" height="9.8" fill="#3c3cfc"/>
<text y="341.89" font-size="6.9" fill="#000"><tspan x="494" textLength="51" lengthAdjust="spacingAndGlyphs">membrane-cable</tspan> <tspan x="549" textLength="17.8" lengthAdjust="spacingAndGlyphs">forces</tspan> <tspan x="571.2" textLength="12.5" lengthAdjust="spacingAndGlyphs">(Kg)</tspan></text>
<text x="16" y="485.15" font-size="6.9" fill="#000" textLength="50.6" lengthAdjust="spacingAndGlyphs">(max) :4400.000</text>
<text x="16" y="494.72" font-size="6.9" fill="#000" textLength="27.8" lengthAdjust="spacingAndGlyphs">4125.000</text>
<text x="16" y="504.29" font-size="6.9" fill="#000" textLength="27.8" lengthAdjust="spacingAndGlyphs">3850.000</text>
<text x="16" y="513.86" font-size="6.9" fill="#000" textLength="27.8" lengthAdjust="spacingAndGlyphs">3575.000</text>
<text x="16" y="523.43" font-size="6.9" fill="#000" textLength="27.8" lengthAdjust="spacingAndGlyphs">3300.000</text>
<text x="16" y="533.00" font-size="6.9" fill="#000" textLength="27.8" lengthAdjust="spacingAndGlyphs">3025.000</text>
<text x="16" y="542.57" font-size="6.9" fill="#000" textLength="27.8" lengthAdjust="spacingAndGlyphs">2750.000</text>
<text x="16" y="552.14" font-size="6.9" fill="#000" textLength="27.8" lengthAdjust="spacingAndGlyphs">2475.000</text>
<text x="16" y="561.71" font-size="6.9" fill="#000" textLength="27.8" lengthAdjust="spacingAndGlyphs">2200.000</text>
<text x="16" y="571.28" font-size="6.9" fill="#000" textLength="27.8" lengthAdjust="spacingAndGlyphs">1925.000</text>
<text x="16" y="580.85" font-size="6.9" fill="#000" textLength="27.8" lengthAdjust="spacingAndGlyphs">1650.000</text>
<text x="16" y="590.42" font-size="6.9" fill="#000" textLength="27.8" lengthAdjust="spacingAndGlyphs">1375.000</text>
<text x="16" y="599.99" font-size="6.9" fill="#000" textLength="27.3" lengthAdjust="spacingAndGlyphs">1100.000</text>
<text x="16" y="609.56" font-size="6.9" fill="#000" textLength="24.1" lengthAdjust="spacingAndGlyphs">825.000</text>
<text x="16" y="619.13" font-size="6.9" fill="#000" textLength="24.1" lengthAdjust="spacingAndGlyphs">550.000</text>
<text x="16" y="628.70" font-size="6.9" fill="#000" textLength="24.1" lengthAdjust="spacingAndGlyphs">275.000</text>
<text x="16" y="638.27" font-size="6.9" fill="#000" textLength="16.7" lengthAdjust="spacingAndGlyphs">0.000</text>
<rect x="4" y="489.47" width="5.2" height="9.8" fill="#fc8034"/>
<rect x="4" y="499.04" width="5.2" height="9.8" fill="#fca42c"/>
<rect x="4" y="508.61" width="5.2" height="9.8" fill="#fcc82c"/>
<rect x="4" y="518.18" width="5.2" height="9.8" fill="#fcee2c"/>
<rect x="4" y="527.75" width="5.2" height="9.8" fill="#c0ee2c"/>
<rect x="4" y="537.32" width="5.2" height="9.8" fill="#7cee2c"/>
<rect x="4" y="546.89" width="5.2" height="9.8" fill="#36ee36"/>
<rect x="4" y="556.46" width="5.2" height="9.8" fill="#30ee60"/>
<rect x="4" y="566.03" width="5.2" height="9.8" fill="#30ee96"/>
<rect x="4" y="575.60" width="5.2" height="9.8" fill="#30eec6"/>
<rect x="4" y="585.17" width="5.2" height="9.8" fill="#30eeee"/>
<rect x="4" y="594.74" width="5.2" height="9.8" fill="#34b8f6"/>
<rect x="4" y="604.31" width="5.2" height="9.8" fill="#3488f6"/>
<rect x="4" y="613.88" width="5.2" height="9.8" fill="#3c62f6"/>
<rect x="4" y="623.45" width="5.2" height="9.8" fill="#3c3cfc"/>
<text y="652.79" font-size="6.9" fill="#000"><tspan x="16" textLength="51" lengthAdjust="spacingAndGlyphs">membrane-cable</tspan> <tspan x="71" textLength="17.8" lengthAdjust="spacingAndGlyphs">forces</tspan> <tspan x="93.2" textLength="12.5" lengthAdjust="spacingAndGlyphs">(Kg)</tspan></text>
<text x="494" y="485.15" font-size="6.9" fill="#000" textLength="50.6" lengthAdjust="spacingAndGlyphs">(max) :2800.000</text>
<text x="494" y="494.72" font-size="6.9" fill="#000" textLength="27.8" lengthAdjust="spacingAndGlyphs">2625.000</text>
<text x="494" y="504.29" font-size="6.9" fill="#000" textLength="27.8" lengthAdjust="spacingAndGlyphs">2450.000</text>
<text x="494" y="513.86" font-size="6.9" fill="#000" textLength="27.8" lengthAdjust="spacingAndGlyphs">2275.000</text>
<text x="494" y="523.43" font-size="6.9" fill="#000" textLength="27.8" lengthAdjust="spacingAndGlyphs">2100.000</text>
<text x="494" y="533.00" font-size="6.9" fill="#000" textLength="27.8" lengthAdjust="spacingAndGlyphs">1925.000</text>
<text x="494" y="542.57" font-size="6.9" fill="#000" textLength="27.8" lengthAdjust="spacingAndGlyphs">1750.000</text>
<text x="494" y="552.14" font-size="6.9" fill="#000" textLength="27.8" lengthAdjust="spacingAndGlyphs">1575.000</text>
<text x="494" y="561.71" font-size="6.9" fill="#000" textLength="27.8" lengthAdjust="spacingAndGlyphs">1400.000</text>
<text x="494" y="571.28" font-size="6.9" fill="#000" textLength="27.8" lengthAdjust="spacingAndGlyphs">1225.000</text>
<text x="494" y="580.85" font-size="6.9" fill="#000" textLength="27.8" lengthAdjust="spacingAndGlyphs">1050.000</text>
<text x="494" y="590.42" font-size="6.9" fill="#000" textLength="24.1" lengthAdjust="spacingAndGlyphs">875.000</text>
<text x="494" y="599.99" font-size="6.9" fill="#000" textLength="24.1" lengthAdjust="spacingAndGlyphs">700.000</text>
<text x="494" y="609.56" font-size="6.9" fill="#000" textLength="24.1" lengthAdjust="spacingAndGlyphs">525.000</text>
<text x="494" y="619.13" font-size="6.9" fill="#000" textLength="24.1" lengthAdjust="spacingAndGlyphs">350.000</text>
<text x="494" y="628.70" font-size="6.9" fill="#000" textLength="24.1" lengthAdjust="spacingAndGlyphs">175.000</text>
<text x="494" y="638.27" font-size="6.9" fill="#000" textLength="16.7" lengthAdjust="spacingAndGlyphs">0.000</text>
<rect x="482" y="489.47" width="5.2" height="9.8" fill="#fc8034"/>
<rect x="482" y="499.04" width="5.2" height="9.8" fill="#fca42c"/>
<rect x="482" y="508.61" width="5.2" height="9.8" fill="#fcc82c"/>
<rect x="482" y="518.18" width="5.2" height="9.8" fill="#fcee2c"/>
<rect x="482" y="527.75" width="5.2" height="9.8" fill="#c0ee2c"/>
<rect x="482" y="537.32" width="5.2" height="9.8" fill="#7cee2c"/>
<rect x="482" y="546.89" width="5.2" height="9.8" fill="#36ee36"/>
<rect x="482" y="556.46" width="5.2" height="9.8" fill="#30ee60"/>
<rect x="482" y="566.03" width="5.2" height="9.8" fill="#30ee96"/>
<rect x="482" y="575.60" width="5.2" height="9.8" fill="#30eec6"/>
<rect x="482" y="585.17" width="5.2" height="9.8" fill="#30eeee"/>
<rect x="482" y="594.74" width="5.2" height="9.8" fill="#34b8f6"/>
<rect x="482" y="604.31" width="5.2" height="9.8" fill="#3488f6"/>
<rect x="482" y="613.88" width="5.2" height="9.8" fill="#3c62f6"/>
<rect x="482" y="623.45" width="5.2" height="9.8" fill="#3c3cfc"/>
<text y="652.79" font-size="6.9" fill="#000"><tspan x="494" textLength="51" lengthAdjust="spacingAndGlyphs">membrane-cable</tspan> <tspan x="549" textLength="17.8" lengthAdjust="spacingAndGlyphs">forces</tspan> <tspan x="571.2" textLength="12.5" lengthAdjust="spacingAndGlyphs">(Kg)</tspan></text>
<text transform="matrix(0.250,0.540,-0.950,0.300,235.1,198.1)" font-size="11" fill="#8c8c8c" letter-spacing="4.4" word-spacing="2.7">T1 2</text>
<text transform="matrix(0.250,0.540,-0.950,0.300,725.4,194.6)" font-size="11" fill="#8c8c8c" letter-spacing="4.4" word-spacing="2.7">T1 2</text>
<text transform="matrix(0.263,0.567,-0.997,0.315,241.4,502.1)" font-size="11" fill="#8c8c8c" letter-spacing="4.4" word-spacing="2.7">T1 2</text>
<text transform="matrix(0.295,0.637,-1.121,0.354,709.6,495.3)" font-size="11" fill="#8c8c8c" letter-spacing="4.4" word-spacing="2.7">T1 2</text>
</svg>
<div style="left:0px;top:668.3px;width:56px;height:9.7px;background:#cac6be;"></div>
<div style="left:56px;top:668.3px;width:1.5px;height:9.7px;background:#f0eee8;"></div>
<div style="left:61px;top:669.5px;width:175px;height:7.5px;background:#fff;box-shadow:inset 1px 1px 0 #505050;"></div>
<div style="left:226.5px;top:671px;width:8px;height:1px;background:#404040;"></div>
<div style="left:226.5px;top:673.5px;width:8px;height:1px;background:#404040;"></div>
<div style="left:226.5px;top:672px;width:8px;height:1.5px;background:#fff;"></div>
<div style="left:241.5px;top:668px;width:718px;height:10px;box-shadow:inset 1px 1px 0 #a09e98;"></div>
<div style="left:0;top:0;width:400px;height:0">
<span class="t " style="left:245.1px;top:667.30px;font-size:8px;line-height:12px;color:#000;transform:scaleX(0.8159);transform-origin:0 50%;">W:7.5891,6.4691,0.0000</span>
 
<span class="t " style="left:320.85px;top:667.30px;font-size:8px;line-height:12px;color:#000;transform:scaleX(0.8047);transform-origin:0 50%;">UCS:</span>
 
<span class="t " style="left:337.6px;top:667.30px;font-size:8px;line-height:12px;color:#000;transform:scaleX(0.7392);transform-origin:0 50%;">X=7.5891,</span>
 
<span class="t " style="left:367.6px;top:667.30px;font-size:8px;line-height:12px;color:#000;transform:scaleX(0.8086);transform-origin:0 50%;">Y=6.4691</span>
 
</div>
<div style="left:0px;top:678px;width:960px;height:1px;background:#f0eee8;"></div>
<div class="btn" style="left:-9.8px;top:681.5px;width:16.2px;height:17px;background:#d4d0c8"></div>
<svg style="left:-9.8px;top:681.5px" width="16.2" height="17" viewBox="0 0 16.2 17"><ellipse cx="12" cy="11.8" rx="2.6" ry="3" fill="#d8f0dc" stroke="#a0d0b0" stroke-width=".6"/><path d="M11.8 3L15.2 4L15 7.5L12.5 6Z" fill="#f030b0"/><path d="M9.8 5.2L14 7L13.5 9.2L9.8 8Z" fill="#c02030"/></svg>
<div class="btn" style="left:7.5px;top:681.5px;width:16.2px;height:17px;background:#d4d0c8"></div>
<svg style="left:7.5px;top:681.5px" width="16.2" height="17" viewBox="0 0 16.2 17"><rect x="2.3" y="2.1" width="10.2" height="10.2" fill="#fff" stroke="#6a6458" stroke-width=".9"/><text x="4.3" y="9.9" font-size="8.2" fill="#3858d0" font-family="Liberation Sans, sans-serif">P</text><path d="M9.5 6.5L12 5L15 7.5L14 11.5L10.5 11Z" fill="#702028"/><path d="M12 4.8L15.2 6.5L14.6 9Z" fill="#f0208a"/><path d="M11 10L14 11.3L12 12.2Z" fill="#e02040"/><rect x="3" y="12.6" width="2.4" height="1.5" fill="#f0e020"/></svg>
<div class="btn" style="left:24.1px;top:681.5px;width:16.2px;height:17px;background:#d4d0c8"></div>
<svg style="left:24.1px;top:681.5px" width="16.2" height="17" viewBox="0 0 16.2 17"><ellipse cx="7.4" cy="8.5" rx="5.5" ry="6" fill="#f2f8ee"/><path d="M4 4.2Q2.2 8 4.3 12.6L7 14.3L6.5 3Z" fill="#b8e4b4" opacity=".8"/><path d="M2.6 6.5Q4 3.6 7.2 3.1" stroke="#50a860" stroke-width="1.2" fill="none"/><path d="M7.2 3.2Q6.4 8 7.6 13.4" stroke="#78d078" stroke-width="2.2" fill="none"/></svg>
<div class="btn" style="left:40.4px;top:681.5px;width:16.2px;height:17px;background:#d4d0c8"></div>
<svg style="left:40.4px;top:681.5px" width="16.2" height="17" viewBox="0 0 16.2 17"><path d="M2.9 5.8Q3.5 10.8 8.3 10.8Q12.4 10.8 12.9 6.5L10.9 6.5Q10.6 8.5 8.3 8.5Q5.4 8.5 4.9 4.5Z" fill="#f4faf4"/><path d="M2.9 5.8Q3.5 10.8 8.3 10.8Q12.4 10.8 12.9 6.5" stroke="#1c7838" stroke-width="1.5" fill="none"/><path d="M4.9 4.5Q5.4 8.5 8.3 8.5Q10.6 8.5 10.9 6.5" stroke="#38c050" stroke-width="1.4" fill="none"/><path d="M10.9 3.8V6.5" stroke="#4060d0" stroke-width="1.1"/><ellipse cx="8" cy="12.6" rx="3" ry=".9" fill="#cfe6d2"/></svg>
<div class="btn" style="left:61px;top:681.5px;width:16.2px;height:17px;background:#d4d0c8"></div>
<svg style="left:61px;top:681.5px" width="16.2" height="17" viewBox="0 0 16.2 17"><path d="M4 2.2V15.5" stroke="#18a0a0" stroke-width="1.5"/><path d="M4.2 7.8H7.5Q11.8 7.8 12 3.4" stroke="#3048d0" stroke-width="1.2" fill="none"/><circle cx="12" cy="3.4" r="1.1" fill="#3048d0"/><circle cx="7" cy="7.8" r="1" fill="#2038c0"/><circle cx="11.7" cy="10.8" r="1.4" fill="#d02028"/><path d="M2.6 9.5L3.4 13.5L4.6 9.5Z" fill="#3048d0"/></svg>
<div class="btn" style="left:77px;top:681.5px;width:16.2px;height:17px;background:#d4d0c8"></div>
<svg style="left:77px;top:681.5px" width="16.2" height="17" viewBox="0 0 16.2 17"><path d="M3 9.2Q5 7.8 8 8.6Q11.8 9.4 12.5 4" stroke="#5058c8" stroke-width="1.3" fill="none"/><path d="M3.3 9.2V12.5" stroke="#6870d0" stroke-width="1.2"/><path d="M6 10.5H13.5V8.5" stroke="#90a0e0" stroke-width="1.6" fill="none"/></svg>
<div class="btn" style="left:97.2px;top:681.5px;width:16.2px;height:17px;background:#d4d0c8"></div>
<svg style="left:97.2px;top:681.5px" width="16.2" height="17" viewBox="0 0 16.2 17"><path d="M5.5 3V9.5" stroke="#3848b0" stroke-width="1.5"/><path d="M5.5 9.2Q5.8 11 8.3 13.6" stroke="#207858" stroke-width="1.5" fill="none"/><path d="M6.8 9.7L11.8 8.9" stroke="#e04050" stroke-width="1.3"/></svg>
<div class="btn" style="left:113.5px;top:681.5px;width:16.2px;height:17px;background:#d4d0c8"></div>
<svg style="left:113.5px;top:681.5px" width="16.2" height="17" viewBox="0 0 16.2 17"><rect x="6" y="2.5" width="7" height="7" fill="#9098a0"/><path d="M5.5 3V9.5" stroke="#3848b0" stroke-width="1.5"/><path d="M5.5 9.2Q5.8 11 8.3 13.6" stroke="#207858" stroke-width="1.5" fill="none"/><path d="M6.8 9.7L11.8 8.9" stroke="#e04050" stroke-width="1.3"/></svg>
<div class="btn" style="left:129.8px;top:681.5px;width:16.2px;height:17px;background:#d4d0c8"></div>
<svg style="left:129.8px;top:681.5px" width="16.2" height="17" viewBox="0 0 16.2 17"><path d="M2.5 8.2L9.5 3.6L14.4 7.1L10.2 14.2Z" fill="#b4e2c4"/><path d="M5.5 3V9.5" stroke="#3848b0" stroke-width="1.5"/><path d="M5.5 9.2Q5.8 11 8.3 13.6" stroke="#207858" stroke-width="1.5" fill="none"/><path d="M6.8 9.7L11.8 8.9" stroke="#e04050" stroke-width="1.3"/></svg>
<div class="btn" style="left:146.1px;top:681.5px;width:16.2px;height:17px;background:#d4d0c8"></div>
<svg style="left:146.1px;top:681.5px" width="16.2" height="17" viewBox="0 0 16.2 17"><path d="M5 9.5L9.5 8.8L7 11.6Z" fill="#fff"/><path d="M5.5 3V9.5" stroke="#3848b0" stroke-width="1.5"/><path d="M5.5 9.2Q5.8 11 8.3 13.6" stroke="#207858" stroke-width="1.5" fill="none"/><path d="M6.8 9.7L11.8 8.9" stroke="#e04050" stroke-width="1.3"/></svg>
<div class="btn" style="left:162.5px;top:681.5px;width:16.2px;height:17px;background:#bfe0dc"></div>
<svg style="left:162.5px;top:681.5px" width="16.2" height="17" viewBox="0 0 16.2 17"><rect x="12.6" y="7.8" width="2.1" height="2.9" fill="#b0e8c0"/><text x="1.6" y="9.4" font-size="8.2" fill="#f04060" font-family="Liberation Sans, sans-serif">X</text><path d="M8.7 9.6L8.2 5" stroke="#70a8e0" stroke-width="1.1"/><path d="M8.7 9.6L13 13" stroke="#e04848" stroke-width="1.2"/><path d="M8.7 9.6L4 13.5" stroke="#30a070" stroke-width="1.3"/><circle cx="13.7" cy="12.8" r="1.1" fill="#e06020"/></svg>
<div class="btn" style="left:179.3px;top:681.5px;width:16.2px;height:17px;background:#bfe0dc"></div>
<svg style="left:179.3px;top:681.5px" width="16.2" height="17" viewBox="0 0 16.2 17"><rect x="11.1" y="7.1" width="3.2" height="2.5" fill="#a0c8e8"/><text x="2" y="9" font-size="8.2" fill="#f0a030" font-family="Liberation Sans, sans-serif">Y</text><path d="M8.6 2.9V10.3" stroke="#6090e0" stroke-width="1.2"/><path d="M8.6 10.3L3.6 13.9" stroke="#30a070" stroke-width="1.3"/><path d="M8.6 10.3L13.2 12.5" stroke="#e04848" stroke-width="1.2"/><circle cx="13.6" cy="12.7" r="1.1" fill="#e06020"/></svg>
<div class="btn" style="left:196.2px;top:681.5px;width:16.2px;height:17px;background:#d4d0c8"></div>
<svg style="left:196.2px;top:681.5px" width="16.2" height="17" viewBox="0 0 16.2 17"><rect x="11.2" y="7.1" width="3.5" height="7.8" fill="#98c098"/><text x="2.2" y="9.4" font-size="8.2" fill="#4858c0" font-family="Liberation Sans, sans-serif">Z</text><path d="M8.4 10.7L3.4 13.9" stroke="#30a070" stroke-width="1.3"/><path d="M8.4 10.7L11.8 12.5" stroke="#e04848" stroke-width="1.2"/><circle cx="12.6" cy="12.8" r="1.1" fill="#e04020"/></svg>
<div class="btn" style="left:212.6px;top:681.5px;width:16.2px;height:17px;background:#d4d0c8"></div>
<svg style="left:212.6px;top:681.5px" width="16.2" height="17" viewBox="0 0 16.2 17"><rect x="4" y="5.7" width="8.5" height="7.8" fill="#fafcfa"/><path d="M7.9 2.5V7.8" stroke="#5080d0" stroke-width="1.2"/><path d="M7.6 9.6L3.3 12.5" stroke="#30a060" stroke-width="1.2" stroke-dasharray="2 .8"/><path d="M9 9.3L14 11.4" stroke="#e04040" stroke-width="1.2" stroke-dasharray="2 .8"/></svg>
<div style="left:0px;top:701.5px;width:960px;height:1px;background:#f6f4f0;"></div>
<div style="left:-20px;top:704.5px;width:96px;height:13.5px;background:#d4d0c8;box-shadow:inset 1px 1px 0 #fff,inset -1px -1px 0 #404040,inset -2px -2px 0 #8c8a84"></div>
<div style="left:78px;top:704.5px;width:96px;height:13.5px;background:#ebe9e4;box-shadow:inset 1px 1px 0 #707070,inset -1px -1px 0 #fff"></div>
<div style="left:175px;top:704.5px;width:92px;height:13.5px;background:#d4d0c8;box-shadow:inset 1px 1px 0 #fff,inset -1px -1px 0 #404040,inset -2px -2px 0 #8c8a84"></div>
<div style="left:270.5px;top:704.5px;width:93.5px;height:13.5px;background:#d4d0c8;box-shadow:inset 1px 1px 0 #fff,inset -1px -1px 0 #404040,inset -2px -2px 0 #8c8a84"></div>
<span class="t " style="left:-0.4px;top:706.20px;font-size:8px;line-height:12px;color:#000;transform:scaleX(0.7776);transform-origin:0 50%;">cia Engineer - [BV Dilsb...</span>
<span class="t " style="left:92.6px;top:706.20px;font-size:8px;line-height:12px;color:#000;transform:scaleX(0.9318);transform-origin:0 50%;font-weight:bold;">I:\MaxSync\Archiv\A...</span>
<span class="t " style="left:187.6px;top:706.20px;font-size:8px;line-height:12px;color:#000;transform:scaleX(0.8433);transform-origin:0 50%;">office wörterbuch pro</span>
<span class="t " style="left:284.1px;top:706.20px;font-size:8px;line-height:12px;color:#000;transform:scaleX(0.8035);transform-origin:0 50%;">Wind Upx1.5 Cable Forc...</span>
<svg style="left:80.5px;top:706px" width="9.5" height="10" viewBox="0 0 10 10"><rect x=".5" y=".5" width="9" height="9" rx="2" fill="#fff" stroke="#202020"/><path d="M2.5 2.5L8 5L2.5 7.5Z" fill="#d02020"/><circle cx="5" cy="5" r="3.6" fill="none" stroke="#203080" stroke-width=".9"/></svg>
<svg style="left:177px;top:705.5px" width="10" height="10" viewBox="0 0 10 10"><path d="M1 2L7 6L9 8L6 8.5L2 5Z" fill="#e8b820"/><path d="M1 5L5 8" stroke="#c09010" stroke-width="1.2"/><path d="M5 1.5L8.5 5" stroke="#f0d040" stroke-width="1.3"/></svg>
<svg style="left:274px;top:705.5px" width="8" height="10" viewBox="0 0 8 10"><path d="M1 1L4 9L7 1" stroke="#e07020" stroke-width="1.6" fill="none"/><path d="M2.5 3H5.5" stroke="#3070d0" stroke-width="1.4"/><path d="M3.2 6.5H4.8" stroke="#30a040" stroke-width="1.4"/></svg>
<div style="left:721px;top:706.5px;width:7.5px;height:10px;background:#1a2a80;"></div>
<span class="t " style="left:721.05px;top:707.70px;font-size:5px;line-height:8px;color:#fff;transform:scaleX(0.9759);transform-origin:0 50%;font-weight:bold;">OE</span>
<div style="left:730.5px;top:705.5px;width:64.5px;height:11.5px;background:#fff;box-shadow:inset 1px 1px 0 #9a9890;"></div>
<span class="t " style="left:732.9399999999999px;top:706.00px;font-size:7.2px;line-height:11px;color:#707070;transform:scaleX(0.9156);transform-origin:0 50%;">Desktop durchsucher</span>
<div style="left:796px;top:705.5px;width:11px;height:11.5px;background:#e4e8f0;"></div>
<svg style="left:797px;top:706.5px" width="9" height="9" viewBox="0 0 9 9"><circle cx="5.3" cy="3.5" r="2.3" fill="#dfe8ff" stroke="#3060c0" stroke-width="1.1"/><path d="M3.6 5.3L1 8" stroke="#3060c0" stroke-width="1.4"/></svg>
<div style="left:818.5px;top:705.5px;width:60.5px;height:11.5px;background:#fff;box-shadow:inset 1px 1px 0 #808080;"></div>
<span class="t " style="left:820.9399999999999px;top:706.00px;font-size:7.2px;line-height:11px;color:#606060;transform:scaleX(0.8204);transform-origin:0 50%;">Suchbegriff einge...</span>
<svg style="left:882.5px;top:709px" width="5" height="3"><path d="M0 0H5L2.5 3Z" fill="#000"/></svg>
<div style="left:892px;top:708.5px;width:5.5px;height:6px;background:#fff;box-shadow:inset 0 0 0 1px #000,inset 0 2px 0 #000;"></div>
<div style="left:904.5px;top:704px;width:56px;height:14.5px;box-shadow:inset 1px 1px 0 #8c8a84;"></div>
<span class="t " style="left:907.4px;top:705.60px;font-size:8px;line-height:12px;color:#000;transform:scaleX(1.3215);transform-origin:0 50%;font-weight:bold;">«</span>
<svg style="left:904px;top:700px" width="56" height="20" viewBox="0 0 56 20"><ellipse cx="16.3" cy="11.5" rx="4.6" ry="3.6" fill="none" stroke="#a8a8b8" stroke-width=".8" transform="rotate(-20 16.3 11.5)"/><circle cx="13.1" cy="9.6" r="2.1" fill="#2850b8"/><circle cx="13.5" cy="9" r=".8" fill="#88a8e8"/><circle cx="18.1" cy="9.3" r="2.7" fill="#18a828"/><circle cx="16.3" cy="14" r="2.5" fill="#20c030"/><circle cx="16.6" cy="13.6" r="1" fill="#80f080"/><path d="M23.6 7.6V14.6M23.8 11.6L28.6 7.8" stroke="#f01820" stroke-width="2" fill="none"/><path d="M25 11.2L29.6 14.4" stroke="#101010" stroke-width="1.8"/><path d="M28 12.4L30 12.6L29.8 14.8Z" fill="#101010"/><path d="M33.2 12.6L38.6 7.4L41.2 9.8L35.8 15.2Z" fill="none" stroke="#505060" stroke-width=".7" stroke-dasharray="1.2 .8"/><path d="M34 15L40.6 8.4" stroke="#f0a020" stroke-width="2.6" stroke-linecap="round"/><path d="M35 14L39.6 9.4" stroke="#f8d848" stroke-width="1" stroke-linecap="round"/><circle cx="48.1" cy="11.7" r="4.6" fill="#e02828"/><path d="M48.1 11.7L44 9.6A4.6 4.6 0 0 0 46 15.8Z" fill="#28b828"/><path d="M48.1 11.7L46 15.8A4.6 4.6 0 0 0 52.3 13.6Z" fill="#2848d0"/><path d="M48.1 11.7L44 9.6A4.6 4.6 0 0 1 47.6 7.1Z" fill="#f0d020"/><circle cx="48.3" cy="11.6" r="2" fill="#30b060" stroke="#e8e8e8" stroke-width=".5"/><circle cx="48.8" cy="11.2" r="1" fill="#e03030"/></svg>
</body></html>
